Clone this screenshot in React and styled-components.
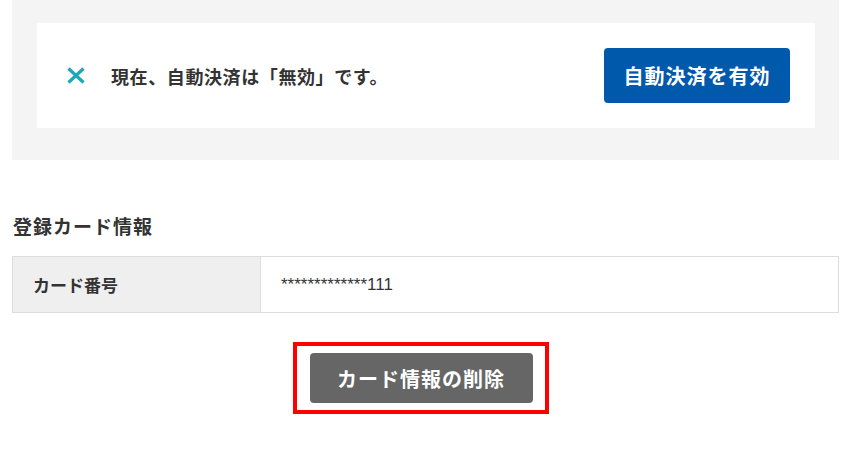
import React from "react";
import styled, { createGlobalStyle } from "styled-components";

const GlobalStyle = createGlobalStyle`
  html, body {
    margin: 0;
    padding: 0;
    background: #fff;
  }
  body {
    font-family: "Noto Sans CJK JP", "Liberation Sans", sans-serif;
    color: #333;
  }
`;

const Page = styled.div`
  width: 827px;
  padding: 0 11px 0 12px;
`;

const StatusPanel = styled.div`
  background: #f4f4f4;
  padding: 23px 24px 32px 25px;
`;

const StatusBox = styled.div`
  background: #fff;
  height: 105px;
  display: flex;
  align-items: center;
  padding: 0 25px 0 30px;
  box-sizing: border-box;
`;

const StatusText = styled.div`
  flex: 1;
  display: flex;
  align-items: center;
  gap: 26px;
  font-size: 18px;
  letter-spacing: 0.6px;
  font-weight: 700;
  color: #333;
`;

const Button = styled.button`
  border: none;
  border-radius: 4px;
  color: #fff;
  font-family: "Noto Sans CJK JP", sans-serif;
  font-weight: 700;
  font-size: 20px;
  letter-spacing: 1px;
  cursor: pointer;
  display: flex;
  align-items: center;
  justify-content: center;
  padding: 0;
  background: ${p => (p.$tone === "gray" ? "#666666" : "#0059ab")};
  width: ${p => p.$w}px;
  height: ${p => p.$h}px;
`;

const SectionTitle = styled.h2`
  margin: 56px 0 0 1px;
  font-size: 19px;
  letter-spacing: 1px;
  font-weight: 700;
  line-height: 20px;
  color: #333;
`;

const InfoTable = styled.div`
  margin-top: 20px;
  display: grid;
  grid-template-columns: 248px 1fr;
  border: 1px solid #dddddd;
  height: 57px;
  box-sizing: border-box;
`;

const LabelCell = styled.div`
  background: #efefef;
  border-right: 1px solid #dddddd;
  display: flex;
  align-items: center;
  padding-left: 20px;
  font-size: 17px;
  font-weight: 700;
  color: #333;
`;

const ValueCell = styled.div`
  display: flex;
  align-items: center;
  padding-left: 20px;
  font-family: "Liberation Sans", Arial, sans-serif;
  font-size: 17px;
  color: #333;
`;

const ActionRow = styled.div`
  margin-top: 29px;
  display: flex;
  justify-content: center;
  padding-right: 10px;
`;

const Highlight = styled.div`
  border: 4px solid #ff0000;
  padding: 7px 12px 7px 13px;
`;

const CrossIcon = () => (
  <svg width="18" height="17" viewBox="0 0 18 17">
    <path d="M1.5 1.5 L16.5 15.5 M16.5 1.5 L1.5 15.5" stroke="#1ea7b8" strokeWidth="3.2" fill="none" />
  </svg>
);

export default function App() {
  return (
    <Page>
      <GlobalStyle />
      <StatusPanel>
        <StatusBox>
          <StatusText>
            <CrossIcon />
            <span>現在、自動決済は「無効」です。</span>
          </StatusText>
          <Button $w={186} $h={55}>自動決済を有効</Button>
        </StatusBox>
      </StatusPanel>

      <SectionTitle>登録カード情報</SectionTitle>
      <InfoTable>
        <LabelCell>カード番号</LabelCell>
        <ValueCell>*************111</ValueCell>
      </InfoTable>

      <ActionRow>
        <Highlight>
          <Button $tone="gray" $w={223} $h={50}>カード情報の削除</Button>
        </Highlight>
      </ActionRow>
    </Page>
  );
}
